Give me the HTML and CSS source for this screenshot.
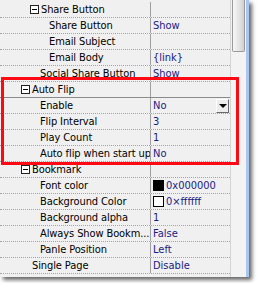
FILE: index.html
```html
<!DOCTYPE html>
<html>
<head>
<meta charset="utf-8">
<link rel="stylesheet" href="styles.css">
</head>
<body>
<div class="frame">
  <div class="grid">
    <div class="row"><div class="name h2"><span class="box"></span>Share Button</div><div class="val"></div></div>
    <div class="row"><div class="name c2">Share Button</div><div class="val">Show</div></div>
    <div class="row"><div class="name c2">Email Subject</div><div class="val"></div></div>
    <div class="row"><div class="name c2">Email Body</div><div class="val">{link}</div></div>
    <div class="row"><div class="name c1">Social Share Button</div><div class="val">Show</div></div>
    <div class="row solid"><div class="name h1"><span class="box"></span>Auto Flip</div><div class="val"></div></div>
    <div class="row edit"><div class="name c1">Enable</div><div class="val">No<span class="drop"><span class="tri"></span></span></div></div>
    <div class="row"><div class="name c1">Flip Interval</div><div class="val">3</div></div>
    <div class="row"><div class="name c1">Play Count</div><div class="val">1</div></div>
    <div class="row"><div class="name c1">Auto flip when start up</div><div class="val">No</div></div>
    <div class="row"><div class="name h1"><span class="box"></span>Bookmark</div><div class="val"></div></div>
    <div class="row"><div class="name c1">Font color</div><div class="val"><span class="swatch black"></span>0x000000</div></div>
    <div class="row"><div class="name c1">Background Color</div><div class="val"><span class="swatch white"></span>0×ffffff</div></div>
    <div class="row"><div class="name c1">Background alpha</div><div class="val">1</div></div>
    <div class="row"><div class="name c1">Always Show Bookm...</div><div class="val">False</div></div>
    <div class="row"><div class="name c1">Panle Position</div><div class="val">Left</div></div>
    <div class="row"><div class="name c0">Single Page</div><div class="val">Disable</div></div>
  </div>
  <div class="scroll"><div class="thumb"></div></div>
</div>
<div class="callout"></div>
</body>
</html>
```
FILE: styles.css
```css
html, body {
  margin: 0;
  padding: 0;
  background: #ffffff;
}
body {
  position: relative;
  width: 258px;
  height: 283px;
  overflow: hidden;
  font-family: "DejaVu Sans Condensed", "DejaVu Sans", sans-serif;
  font-size: 11px;
}
.frame {
  display: flex;
  width: 246px;
  height: 277px;
  border-right: 3px solid #a9c6ee;
  box-shadow: 3px 3px 4px rgba(0, 0, 0, 0.6);
  background: #f0f0f0;
}
.grid {
  width: 230px;
  padding-top: 2px;
  border-right: 1px solid #d4d4d4;
  background: #f0f0f0;
  overflow: hidden;
}
.row {
  display: flex;
  height: 15px;
  line-height: 15px;
  border-bottom: 1px dotted #a4a4a4;
}
.row.solid {
  border-bottom: 1px solid #8a8a8a;
}
.name {
  box-sizing: border-box;
  width: 151px;
  flex: none;
  border-right: 1px solid #a0a0a0;
  white-space: nowrap;
  overflow: hidden;
  color: #000;
  display: flex;
  align-items: center;
  letter-spacing: -0.1px;
}
.c0 { padding-left: 32px; }
.c1 { padding-left: 40px; }
.c2 { padding-left: 49px; }
.h1 { padding-left: 21px; }
.h2 { padding-left: 30px; }
.box {
  position: relative;
  box-sizing: border-box;
  width: 9px;
  height: 9px;
  border: 1px solid #222;
  background: #fff;
  margin-right: 2px;
  flex: none;
}
.box::after {
  content: "";
  position: absolute;
  left: 1px;
  top: 3px;
  width: 5px;
  height: 1px;
  background: #000;
}
.val {
  flex: 1;
  padding-left: 2px;
  color: #1b1b86;
  white-space: nowrap;
  overflow: hidden;
  display: flex;
  align-items: center;
  position: relative;
}
.swatch {
  box-sizing: border-box;
  width: 11px;
  height: 11px;
  margin-right: 2px;
  border: 1px solid #000;
  flex: none;
}
.swatch.black { background: #000; }
.swatch.white { background: #fff; }
.drop {
  position: absolute;
  right: 1px;
  top: 1px;
  box-sizing: border-box;
  width: 13px;
  height: 14px;
  background: #ececec;
  border-top: 1px solid #fff;
  border-left: 1px solid #fff;
  border-right: 1px solid #6a6a6a;
  border-bottom: 1px solid #6a6a6a;
  display: flex;
  align-items: center;
  justify-content: center;
}
.tri {
  width: 0;
  height: 0;
  border-left: 4px solid transparent;
  border-right: 4px solid transparent;
  border-top: 4px solid #000;
}
.scroll {
  width: 15px;
  background: #f3f3f3;
  position: relative;
}
.thumb {
  margin-left: 1px;
  width: 13px;
  height: 52px;
  box-sizing: border-box;
  border: 1px solid #9a9a9a;
  border-top: none;
  border-radius: 0 0 2px 2px;
  background: linear-gradient(to right, #f7f7f7, #e2e2e2 60%, #cfcfcf);
}
.callout {
  position: absolute;
  left: 1px;
  top: 77px;
  width: 232px;
  height: 82px;
  border: 3px solid #ff0a14;
}
```
